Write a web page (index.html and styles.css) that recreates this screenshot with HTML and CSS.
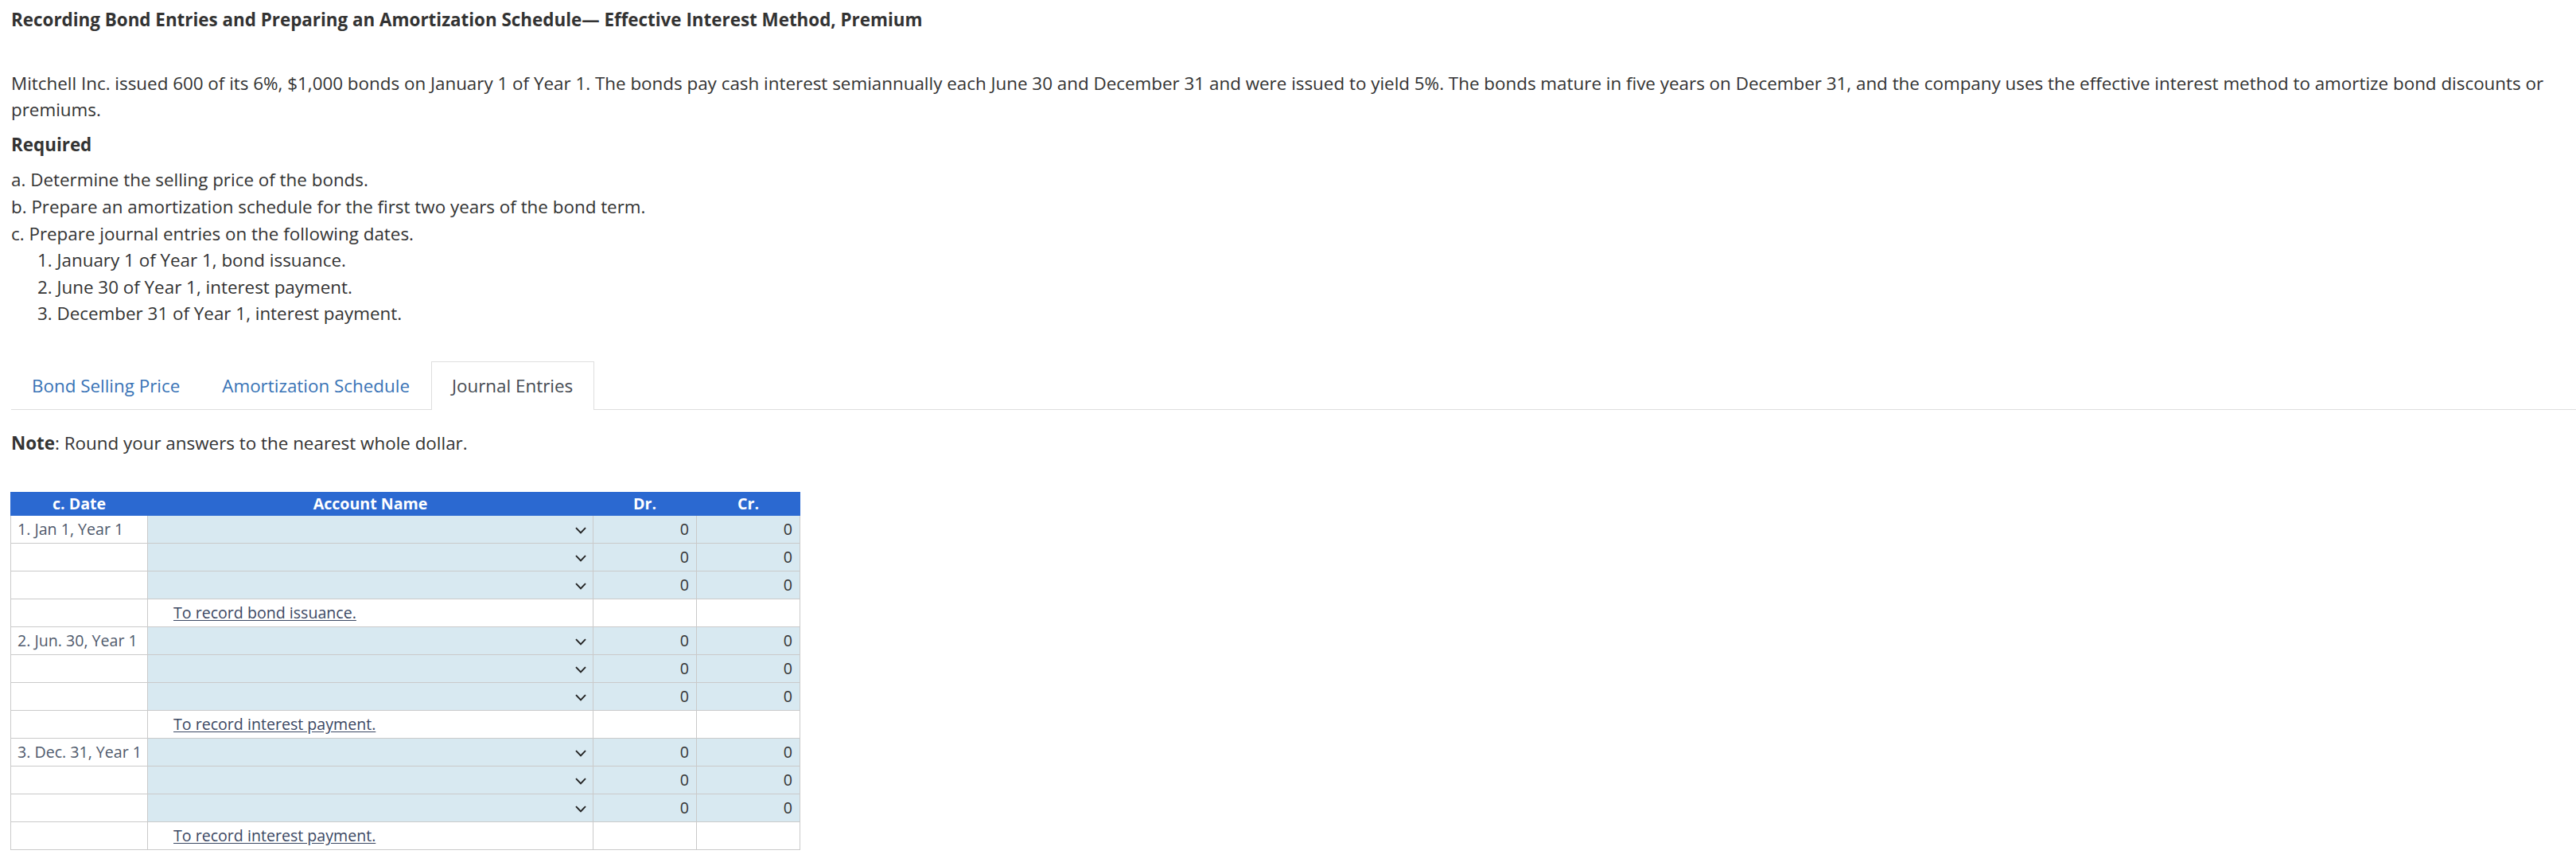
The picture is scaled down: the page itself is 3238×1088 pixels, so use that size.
FILE: index.html
```html
<!DOCTYPE html>
<html lang="en">
<head>
    <meta charset="UTF-8">
    <title>Recording Bond Entries</title>
    <link rel="stylesheet" href="styles.css">
</head>
<body>
<div class="page">
    <h2 class="title">Recording Bond Entries and Preparing an Amortization Schedule— Effective Interest Method, Premium</h2>

    <p class="intro">Mitchell Inc. issued 600 of its 6%, $1,000 bonds on January 1 of Year 1. The bonds pay cash interest semiannually each June 30 and December 31 and were issued to yield 5%. The bonds mature in five years on December 31, and the company uses the effective interest method to amortize bond discounts or premiums.</p>

    <h3 class="required">Required</h3>
    <div class="tasks">
        <p>a. Determine the selling price of the bonds.</p>
        <p>b. Prepare an amortization schedule for the first two years of the bond term.</p>
        <p>c. Prepare journal entries on the following dates.</p>
        <div class="dates">
            <p>1. January 1 of Year 1, bond issuance.</p>
            <p>2. June 30 of Year 1, interest payment.</p>
            <p>3. December 31 of Year 1, interest payment.</p>
        </div>
    </div>

    <div class="tabs">
        <a class="tab">Bond Selling Price</a>
        <a class="tab">Amortization Schedule</a>
        <a class="tab active">Journal Entries</a>
    </div>

    <p class="note"><strong>Note</strong>: Round your answers to the nearest whole dollar.</p>

    <table class="journal">
        <colgroup>
            <col class="c-date">
            <col class="c-acct">
            <col class="c-num">
            <col class="c-num">
        </colgroup>
        <thead>
            <tr>
                <th>c. Date</th>
                <th>Account Name</th>
                <th>Dr.</th>
                <th>Cr.</th>
            </tr>
        </thead>
        <tbody id="rows"></tbody>
    </table>
</div>

<script>
    const entries = [
        { date: '1. Jan 1, Year 1', memo: 'To record bond issuance.' },
        { date: '2. Jun. 30, Year 1', memo: 'To record interest payment.' },
        { date: '3. Dec. 31, Year 1', memo: 'To record interest payment.' }
    ];

    const chevron = '<svg class="chev" width="14" height="9" viewBox="0 0 14 9"><path d="M1 1.2 L7 7.4 L13 1.2" fill="none" stroke="#222" stroke-width="1.9"/></svg>';

    let html = '';
    entries.forEach(entry => {
        for (let i = 0; i < 3; i++) {
            html += `
                <tr>
                    <td class="date">${i === 0 ? entry.date : ''}</td>
                    <td class="input acct">${chevron}</td>
                    <td class="input num">0</td>
                    <td class="input num">0</td>
                </tr>`;
        }
        html += `
            <tr>
                <td class="date"></td>
                <td class="memo"><a>${entry.memo}</a></td>
                <td></td>
                <td></td>
            </tr>`;
    });
    document.getElementById('rows').innerHTML = html;
</script>
</body>
</html>
```

FILE: styles.css
```css
body {
    margin: 0;
    font-family: "Open Sans", "Liberation Sans", sans-serif;
    font-size: 22.4px;
    line-height: 33.6px;
    color: #333;
    background: #fff;
}
.page {
    padding: 8px 0 0 14px;
}
.title {
    margin: 0;
    font-size: 22.4px;
    line-height: 33.6px;
    font-weight: 700;
    color: #333;
}
.intro {
    margin: 46px 0 0;
}
.required {
    margin: 10px 0 0;
    font-size: 22.4px;
    font-weight: 700;
}
.tasks {
    margin-top: 11px;
}
.tasks p {
    margin: 0;
}
.dates {
    padding-left: 33px;
}
.tabs {
    display: flex;
    margin-top: 43px;
    border-bottom: 1px solid #dedede;
}
.tab {
    padding: 13px 26px 12px 25px;
    margin-bottom: -1px;
    border: 1px solid transparent;
    border-bottom: 0;
    color: #3873b6;
    cursor: pointer;
}
.tab.active {
    color: #444a52;
    background: #fff;
    border-color: #dedede;
    padding-bottom: 13px;
}
.note {
    margin: 25px 0 0;
}
.note strong {
    font-weight: 700;
}
.journal {
    margin: 45px 0 0 -1px;
    width: 991px;
    border-collapse: collapse;
    table-layout: fixed;
    font-size: 19.6px;
}
.c-date {
    width: 172px;
}
.c-acct {
    width: 560px;
}
.c-num {
    width: 130px;
}
.journal th {
    background: #2b69d1;
    color: #fff;
    font-weight: 700;
    line-height: 28px;
    padding: 0;
    border: 1px solid #2b69d1;
    text-align: center;
}
.journal td {
    border: 1px solid #cacaca;
    line-height: 34px;
    height: 34px;
    padding: 0 9px;
    background: #fff;
}
.journal td.date {
    color: #4f5a6c;
    padding-left: 8px;
    white-space: nowrap;
}
.journal td.input {
    background: #d8e9f1;
}
.journal td.acct {
    text-align: right;
    padding-right: 8px;
}
.chev {
    vertical-align: middle;
}
.journal td.num {
    text-align: right;
    color: #333;
}
.journal td.memo {
    padding-left: 32px;
}
.memo a {
    color: #3b4863;
    text-decoration: underline;
    text-underline-offset: 2px;
}
```
